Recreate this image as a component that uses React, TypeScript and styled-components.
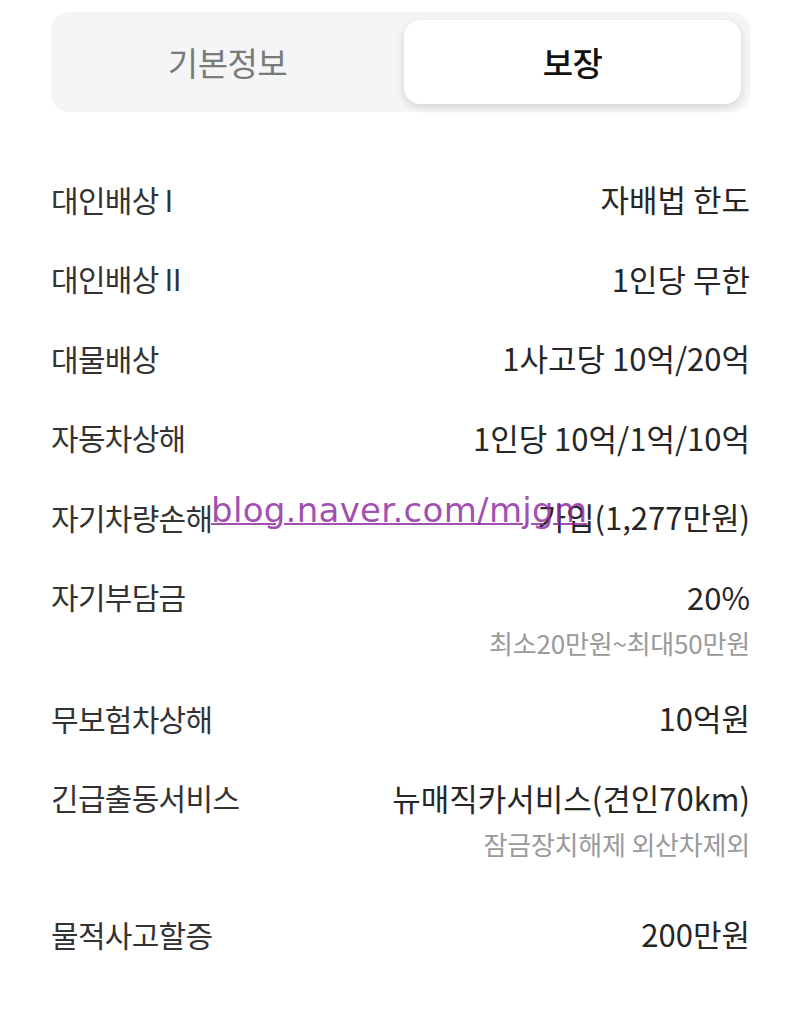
import React from "react";
import styled, { createGlobalStyle } from "styled-components";

const Global = createGlobalStyle`
  html, body { margin: 0; padding: 0; background: #ffffff; }
  body { font-family: "Noto Sans CJK KR", "Noto Sans", sans-serif; }
`;

const Page = styled.div`
  width: 800px;
  padding: 12px 50px 0 51px;
  box-sizing: border-box;
`;

const Tabs = styled.div`
  display: grid;
  grid-template-columns: 1fr 1fr;
  height: 100px;
  padding: 8px 9px 8px 8px;
  box-sizing: border-box;
  background: #f4f5f7;
  border-radius: 18px;
  gap: 8px;
`;

const Tab = styled.div<{ $active?: boolean }>`
  display: flex;
  align-items: center;
  justify-content: center;
  border-radius: 16px;
  font-size: 33px;
  letter-spacing: -0.5px;
  color: ${(p) => (p.$active ? "#111" : "#7a7a7a")};
  font-weight: ${(p) => (p.$active ? 500 : 400)};
  background: ${(p) => (p.$active ? "#ffffff" : "transparent")};
  box-shadow: ${(p) => (p.$active ? "0 3px 8px rgba(0,0,0,0.14)" : "none")};
`;

const List = styled.div`
  margin-top: 47px;
  display: flex;
  flex-direction: column;
`;

const Row = styled.div<{ $extra?: number }>`
  position: relative;
  padding: 20px 0 ${(p) => 20 + (p.$extra ?? 0)}px;
  display: flex;
  flex-direction: column;
`;

const Main = styled.div`
  display: flex;
  justify-content: space-between;
  align-items: center;
  height: 39.5px;
`;

const Label = styled.span`
  font-size: 30px;
  letter-spacing: -0.7px;
  color: #333;
`;

const Value = styled.span`
  font-size: 31px;
  letter-spacing: 0;
  color: #262626;
`;

const Sub = styled.div`
  margin-top: 12px;
  height: 30px;
  line-height: 30px;
  text-align: right;
  font-size: 26px;
  letter-spacing: -0.2px;
  color: #9a9a9a;
`;

const Watermark = styled.span`
  position: absolute;
  left: 160px;
  top: 13px;
  font-family: "DejaVu Sans", sans-serif;
  font-size: 34px;
  letter-spacing: 0.3px;
  color: rgba(140, 40, 160, 0.82);
  text-decoration: underline;
  text-decoration-thickness: 2px;
  text-underline-offset: 1px;
  pointer-events: none;
`;

type Item = { label: string; value: string; sub?: string; extra?: number; mark?: boolean };

const items: Item[] = [
  { label: "대인배상 I", value: "자배법 한도" },
  { label: "대인배상 II", value: "1인당 무한" },
  { label: "대물배상", value: "1사고당 10억/20억" },
  { label: "자동차상해", value: "1인당 10억/1억/10억" },
  { label: "자기차량손해", value: "가입(1,277만원)", mark: true },
  { label: "자기부담금", value: "20%", sub: "최소20만원~최대50만원" },
  { label: "무보험차상해", value: "10억원" },
  { label: "긴급출동서비스", value: "뉴매직카서비스(견인70km)", sub: "잠금장치해제 외산차제외", extra: 15 },
  { label: "물적사고할증", value: "200만원" },
];

export default function App() {
  return (
    <Page>
      <Global />
      <Tabs>
        <Tab>기본정보</Tab>
        <Tab $active>보장</Tab>
      </Tabs>
      <List>
        {items.map((it) => (
          <Row key={it.label} $extra={it.extra}>
            <Main>
              <Label>{it.label}</Label>
              <Value>{it.value}</Value>
            </Main>
            {it.sub && <Sub>{it.sub}</Sub>}
            {it.mark && <Watermark>blog.naver.com/mjgm</Watermark>}
          </Row>
        ))}
      </List>
    </Page>
  );
}
